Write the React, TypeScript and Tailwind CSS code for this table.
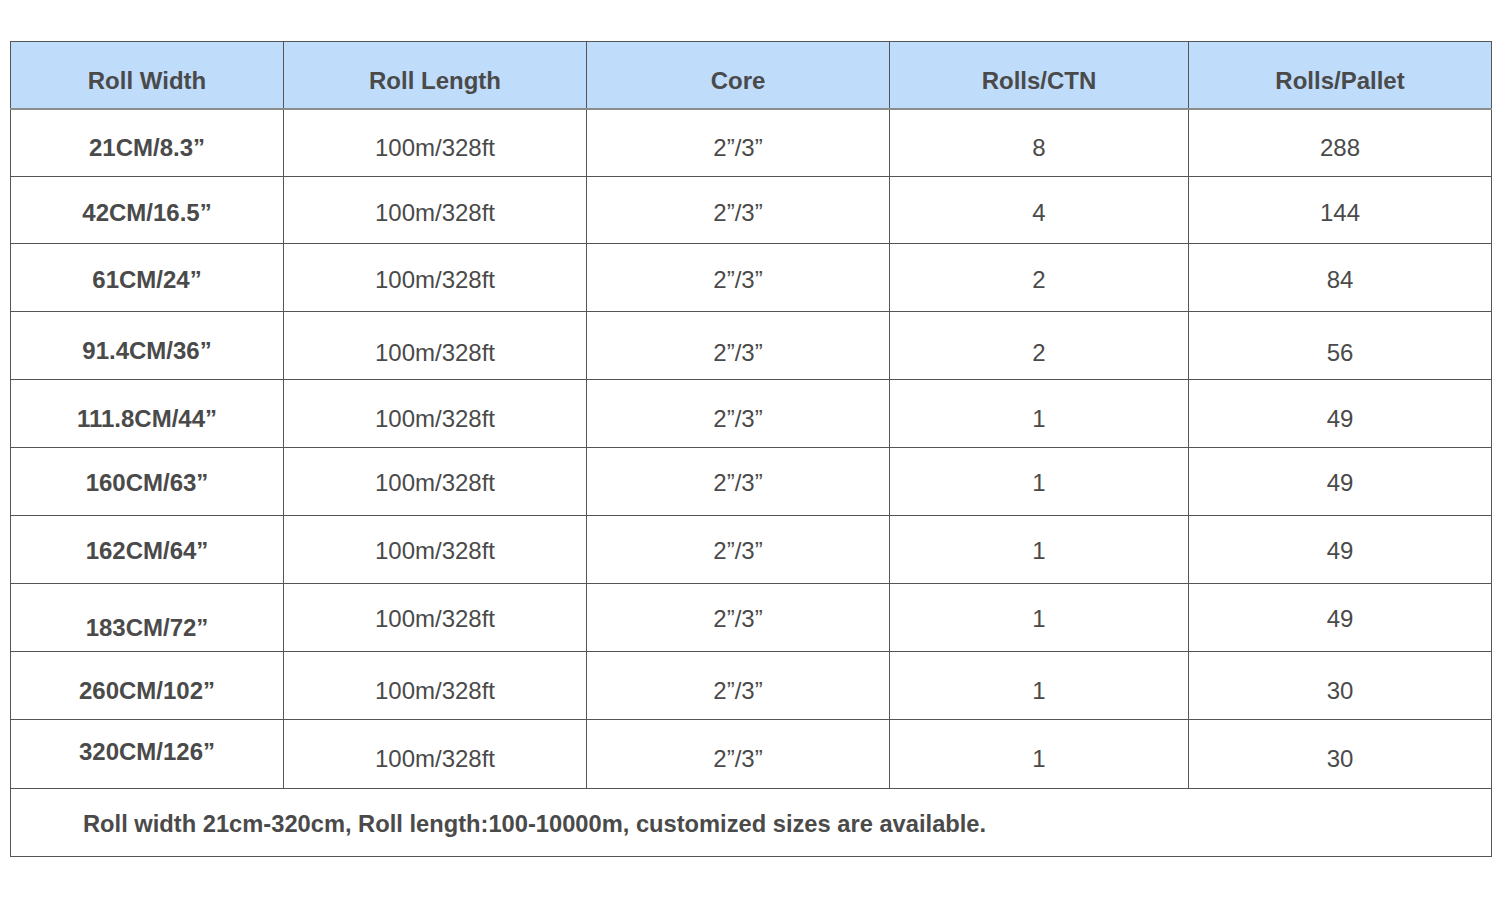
const rows = [
	{ width: "21CM/8.3”", ctn: "8", pallet: "288", h: "h-[68px]", a: "pt-[10px]", b: "pt-[10px]" },
	{ width: "42CM/16.5”", ctn: "4", pallet: "144", h: "h-[67px]", a: "pt-[5px]", b: "pt-[5px]" },
	{ width: "61CM/24”", ctn: "2", pallet: "84", h: "h-[68px]", a: "pt-[4px]", b: "pt-[4px]" },
	{ width: "91.4CM/36”", ctn: "2", pallet: "56", h: "h-[68px]", a: "pt-[10px]", b: "pt-[14px]" },
	{ width: "111.8CM/44”", ctn: "1", pallet: "49", h: "h-[68px]", a: "pt-[10px]", b: "pt-[10px]" },
	{ width: "160CM/63”", ctn: "1", pallet: "49", h: "h-[68px]", a: "pt-[2px]", b: "pt-[2px]" },
	{ width: "162CM/64”", ctn: "1", pallet: "49", h: "h-[68px]", a: "pt-[2px]", b: "pt-[2px]" },
	{ width: "183CM/72”", ctn: "1", pallet: "49", h: "h-[68px]", a: "pt-[20px]", b: "pt-[2px]" },
	{ width: "260CM/102”", ctn: "1", pallet: "30", h: "h-[68px]", a: "pt-[10px]", b: "pt-[10px]" },
	{ width: "320CM/126”", ctn: "1", pallet: "30", h: "h-[69px]", a: "pb-[4px]", b: "pt-[10px]" },
];

const headers = ["Roll Width", "Roll Length", "Core", "Rolls/CTN", "Rolls/Pallet"];

export default function App() {
	return (
		<div
			className="w-[1500px] h-[904px] bg-white pt-[41px] pl-[10px] text-[#4a4a4a]"
			style={{ fontFamily: '"Liberation Sans", Arial, sans-serif' }}>
			<table className="w-[1481px] table-fixed border-collapse border border-[#555] text-[24px] leading-none">
				<colgroup>
					<col className="w-[273px]" />
					<col className="w-[303px]" />
					<col className="w-[303px]" />
					<col className="w-[299px]" />
					<col className="w-[303px]" />
				</colgroup>
				<thead>
					<tr className="h-[67px] bg-[#bfddfb] border-b-2 border-[#8c8c8c]">
						{headers.map((h) => (
							<th
								key={h}
								className="border-x border-[#555] font-bold text-center align-middle pt-[12px]">
								{h}
							</th>
						))}
					</tr>
				</thead>
				<tbody>
					{rows.map((r) => (
						<tr key={r.width} className={r.h}>
							<td className={`border border-[#555] font-bold text-center ${r.a}`}>
								{r.width}
							</td>
							<td className={`border border-[#555] text-center ${r.b}`}>
								100m/328ft
							</td>
							<td className={`border border-[#555] text-center ${r.b}`}>
								2”/3”
							</td>
							<td className={`border border-[#555] text-center ${r.b}`}>
								{r.ctn}
							</td>
							<td className={`border border-[#555] text-center ${r.b}`}>
								{r.pallet}
							</td>
						</tr>
					))}
					<tr className="h-[68px]">
						<td
							colSpan={5}
							className="border border-[#555] font-bold text-left text-[23.7px] pl-[72px] pt-[4px]">
							Roll width 21cm-320cm, Roll length:100-10000m, customized sizes are available.
						</td>
					</tr>
				</tbody>
			</table>
		</div>
	);
}
